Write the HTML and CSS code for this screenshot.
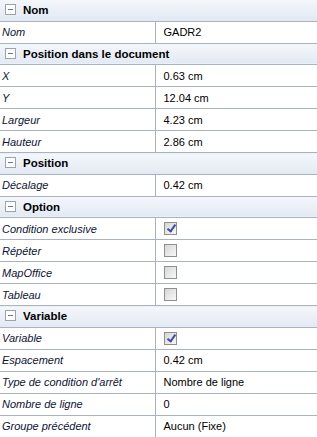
FILE: index.html
```html
<!DOCTYPE html>
<html lang="fr">
<head>
  <meta charset="UTF-8">
  <title>Propriétés</title>
  <link rel="stylesheet" href="styles.css">
</head>
<body>
  <table class="props">
    <colgroup>
      <col class="col-label">
      <col class="col-value">
    </colgroup>

    <!-- Nom -->
    <tr class="group"><td colspan="2"><span class="toggle"></span>Nom</td></tr>
    <tr><td class="label">Nom</td><td class="value">GADR2</td></tr>

    <!-- Position dans le document -->
    <tr class="group"><td colspan="2"><span class="toggle"></span>Position dans le document</td></tr>
    <tr><td class="label">X</td><td class="value">0.63 cm</td></tr>
    <tr><td class="label">Y</td><td class="value">12.04 cm</td></tr>
    <tr><td class="label">Largeur</td><td class="value">4.23 cm</td></tr>
    <tr><td class="label">Hauteur</td><td class="value">2.86 cm</td></tr>

    <!-- Position -->
    <tr class="group"><td colspan="2"><span class="toggle"></span>Position</td></tr>
    <tr><td class="label">Décalage</td><td class="value">0.42 cm</td></tr>

    <!-- Option -->
    <tr class="group"><td colspan="2"><span class="toggle"></span>Option</td></tr>
    <tr><td class="label">Condition exclusive</td><td class="value"><span class="check checked"></span></td></tr>
    <tr><td class="label">Répéter</td><td class="value"><span class="check"></span></td></tr>
    <tr><td class="label">MapOffice</td><td class="value"><span class="check"></span></td></tr>
    <tr><td class="label">Tableau</td><td class="value"><span class="check"></span></td></tr>

    <!-- Variable -->
    <tr class="group"><td colspan="2"><span class="toggle"></span>Variable</td></tr>
    <tr><td class="label">Variable</td><td class="value"><span class="check checked"></span></td></tr>
    <tr><td class="label">Espacement</td><td class="value">0.42 cm</td></tr>
    <tr><td class="label">Type de condition d'arrêt</td><td class="value">Nombre de ligne</td></tr>
    <tr><td class="label">Nombre de ligne</td><td class="value">0</td></tr>
    <tr><td class="label">Groupe précédent</td><td class="value">Aucun (Fixe)</td></tr>
  </table>
</body>
</html>
```

FILE: styles.css
```css
/* page */
body {
  margin: 0;
  padding: 0;
  background: #fff;
  font-family: "Liberation Sans", Arial, sans-serif;
  font-size: 11px;
  color: #000;
}

/* grille de propriétés */
.props {
  width: 317px;
  border-collapse: collapse;
  table-layout: fixed;
}
.col-label { width: 155px; }
.col-value { width: 162px; }

.props td {
  padding: 0;
  border-bottom: 1px solid #a9b3bf;
}

/* en-tête de groupe */
.group td {
  height: 20.5px;
  padding-left: 5px;
  background: linear-gradient(#f4f7fb, #e2e9f3);
  font-weight: bold;
  font-size: 11.5px;
  color: #000;
  white-space: nowrap;
}
.toggle {
  display: inline-block;
  position: relative;
  width: 9px;
  height: 9px;
  margin-right: 7px;
  vertical-align: -1px;
  border: 1px solid #9aa3ae;
  background: #fff;
}
.toggle::after {
  content: "";
  position: absolute;
  left: 2px;
  top: 4px;
  width: 5px;
  height: 1px;
  background: #6d7682;
}

/* lignes */
.label {
  height: 21px;
  padding-left: 2px !important;
  font-style: italic;
  color: #0d1433;
  border-right: 1px solid #a9b3bf;
  white-space: nowrap;
  overflow: hidden;
}
.value {
  padding-left: 8px !important;
  border-right: 1px solid #a9b3bf;
  color: #000;
}

/* cases à cocher */
.check {
  display: inline-block;
  position: relative;
  width: 11px;
  height: 11px;
  vertical-align: middle;
  border: 1px solid #8f8f8f;
  background: linear-gradient(135deg, #d6d6d6, #f8f8f8);
}
.check.checked::after {
  content: "";
  position: absolute;
  left: 4px;
  top: 0px;
  width: 3px;
  height: 7px;
  border-right: 2px solid #3a4fa0;
  border-bottom: 2px solid #3a4fa0;
  transform: rotate(35deg);
}
```
